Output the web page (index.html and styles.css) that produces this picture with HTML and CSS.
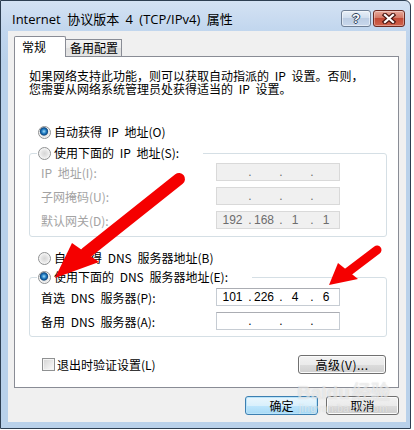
FILE: index.html
```html
<!DOCTYPE html>
<html lang="zh-CN">
<head>
    <meta charset="UTF-8">
    <meta name="viewport" content="width=device-width, initial-scale=1.0">
    <title>Internet 协议版本 4 (TCP/IPv4) 属性</title>
    <link rel="stylesheet" href="styles.css">
</head>
<body>
    <div class="screen">
        <div class="window">
            <div class="titlebar">
                <span class="title">Internet 协议版本 4 (TCP/IPv4) 属性</span>
                <div class="caption-buttons">
                    <div class="caption help"><span>?</span></div>
                    <div class="caption close">
                        <svg width="16" height="11" viewBox="0 0 16 11">
                            <path d="M4 2 L12 9 M12 2 L4 9" stroke="#4a1712" stroke-width="4.5" stroke-linecap="square"/>
                            <path d="M4 2 L12 9 M12 2 L4 9" stroke="#fff" stroke-width="2.2" stroke-linecap="square"/>
                        </svg>
                    </div>
                </div>
            </div>

            <div class="client">
                <div class="tabs">
                    <div class="tab active">常规</div>
                    <div class="tab">备用配置</div>
                </div>

                <div class="panel">
                    <p class="intro">如果网络支持此功能，则可以获取自动指派的 IP 设置。否则，<br>您需要从网络系统管理员处获得适当的 IP 设置。</p>

                    <div class="option ip-auto"><span class="radio checked"></span>自动获得 IP 地址(O)</div>

                    <fieldset class="group ip-group disabled">
                        <legend><span class="option"><span class="radio"></span>使用下面的 IP 地址(S):</span></legend>
                        <div class="row">
                            <span class="label">IP 地址(I):</span>
                            <span class="ip"><span></span><i>.</i><span></span><i>.</i><span></span><i>.</i><span></span></span>
                        </div>
                        <div class="row">
                            <span class="label">子网掩码(U):</span>
                            <span class="ip"><span></span><i>.</i><span></span><i>.</i><span></span><i>.</i><span></span></span>
                        </div>
                        <div class="row">
                            <span class="label">默认网关(D):</span>
                            <span class="ip"><span>192</span><i>.</i><span>168</span><i>.</i><span>1</span><i>.</i><span>1</span></span>
                        </div>
                    </fieldset>

                    <div class="option dns-auto"><span class="radio"></span>自动获得 DNS 服务器地址(B)</div>

                    <fieldset class="group dns-group">
                        <legend><span class="option"><span class="radio checked"></span>使用下面的 DNS 服务器地址(E):</span></legend>
                        <div class="row">
                            <span class="label">首选 DNS 服务器(P):</span>
                            <span class="ip"><span>101</span><i>.</i><span>226</span><i>.</i><span>4</span><i>.</i><span>6</span></span>
                        </div>
                        <div class="row">
                            <span class="label">备用 DNS 服务器(A):</span>
                            <span class="ip"><span></span><i>.</i><span></span><i>.</i><span></span><i>.</i><span></span></span>
                        </div>
                    </fieldset>

                    <div class="panel-footer">
                        <span class="check-label"><span class="checkbox"></span>退出时验证设置(L)</span>
                        <button class="btn advanced">高级(V)...</button>
                    </div>
                </div>

                <div class="actions">
                    <button class="btn default">确定</button>
                    <button class="btn">取消</button>
                </div>
            </div>
        </div>

        <!-- red marker arrows drawn over the dialog -->
        <svg class="arrows" width="414" height="430" viewBox="0 0 414 430">
            <line x1="179" y1="179" x2="86" y2="253" stroke="#f50000" stroke-width="12" stroke-linecap="round"/>
            <polygon points="72,243 99,262 55,278" fill="#f50000"/>
            <line x1="377" y1="250" x2="348" y2="272" stroke="#f50000" stroke-width="9" stroke-linecap="round"/>
            <polygon points="338,263 358,279 329,285" fill="#f50000"/>
        </svg>

        <div class="watermark">
            <span class="wm-logo">Bai<b>du</b>经验</span>
            <span class="wm-url">jingyan.baidu.com</span>
        </div>
    </div>
</body>
</html>
```

FILE: styles.css
```css
html, body {
    margin: 0;
    background: #fff;
}

body {
    font-family: "Noto Sans CJK SC", sans-serif;
    font-size: 12px;
    color: #000;
}

.screen {
    position: relative;
    width: 414px;
    height: 430px;
}

.window {
    display: flex;
    flex-direction: column;
    width: 411px;
    height: 429px;
    box-sizing: border-box;
    padding-bottom: 6px;
    border: 1px solid #2e3f52;
    border-radius: 0 6px 0 0;
    background: linear-gradient(to bottom, #d4e2f3, #c1d6ee 30px, #b9d1ea 60px, #b9d1ea);
}

.titlebar {
    display: flex;
    align-items: flex-start;
    height: 30px;
    padding-left: 11px;
}

.title {
    margin-top: 11px;
    font-family: "Open Sans", "Noto Sans CJK SC", sans-serif;
    font-size: 13px;
    line-height: 15px;
    word-spacing: 3px;
    white-space: nowrap;
}

.caption-buttons {
    display: flex;
    gap: 2px;
    margin: 9px 5px 0 auto;
}

.caption {
    display: flex;
    justify-content: center;
    align-items: center;
    height: 17px;
    box-sizing: border-box;
    border-radius: 3px;
}

.caption.help {
    width: 30px;
    border: 1px solid #6f7f95;
    background: linear-gradient(to bottom, #e9f0f8, #d1deee 45%, #bccde3 50%, #c9d8ec);
    box-shadow: inset 0 0 0 1px rgba(255, 255, 255, 0.5);
}

.caption.help span {
    font-family: "Liberation Sans", sans-serif;
    font-weight: bold;
    font-size: 13px;
    line-height: 13px;
    color: #fff;
    text-shadow: 1px 0 0 #2f425c, -1px 0 0 #2f425c, 0 1px 0 #2f425c, 0 -1px 0 #2f425c;
}

.caption.close {
    width: 32px;
    border: 1px solid #6b2a22;
    background: linear-gradient(to bottom, #e8aa9c, #d47967 45%, #c24a36 50%, #d0634d);
    box-shadow: inset 0 0 0 1px rgba(255, 255, 255, 0.35);
}

.client {
    flex: 1;
    margin: 0 4px 0 7px;
    background: #f0f0f0;
}

/* tabs */

.tabs {
    position: relative;
    z-index: 1;
    display: flex;
    align-items: flex-end;
    margin: 5px 0 -1px 6px;
}

.tab {
    box-sizing: border-box;
    border: 1px solid #898c95;
    border-bottom: none;
    line-height: 14px;
}

.tab.active {
    width: 52px;
    height: 21px;
    padding: 3px 0 0 7px;
    background: #fff;
    border-radius: 2px 2px 0 0;
}

.tab:not(.active) {
    width: 57px;
    height: 17px;
    margin: 0 0 1px -1px;
    padding: 1px 0 0 4px;
    background: linear-gradient(to bottom, #f3f3f3, #ebebeb 50%, #dedede 50%, #e5e5e5);
}

.panel {
    width: 385px;
    height: 332px;
    margin-left: 6px;
    box-sizing: border-box;
    padding: 12px 11px 0 14px;
    border: 1px solid #898c95;
    background: #fff;
    word-spacing: 3px;
}

.intro {
    margin: 0;
    line-height: 13px;
    white-space: nowrap;
}

/* radios, checkboxes */

.option {
    display: flex;
    align-items: center;
    gap: 3px;
    height: 14px;
    line-height: 14px;
    white-space: nowrap;
}

.ip-auto {
    margin-top: 30px;
    padding-left: 9px;
}

.dns-auto {
    margin-top: 14px;
    padding-left: 9px;
}

.radio {
    flex-shrink: 0;
    width: 13px;
    height: 13px;
    box-sizing: border-box;
    border: 1px solid #8f9192;
    border-radius: 50%;
    background: radial-gradient(circle, #d6d6d6 0, #e4e4e4 3px, #fbfbfb 6px);
}

.radio.checked {
    background:
        radial-gradient(circle at 45% 40%, #a9e0fb 0, #2b86c9 2px, #0b4f90 3.5px, #4a6f93 4px, transparent 4.6px),
        radial-gradient(circle, #d6d6d6 0, #e8e8e8 4px, #fbfbfb 6px);
}

.checkbox {
    flex-shrink: 0;
    width: 13px;
    height: 13px;
    box-sizing: border-box;
    border: 1px solid #8f9192;
    background: linear-gradient(135deg, #d3d3d3, #f0f0f0 70%, #fcfcfc);
    box-shadow: inset 0 0 0 1px #f4f4f4;
}

/* group boxes */

.group {
    min-width: 0;
    margin: 7px 0 0;
    padding: 0 0 4px;
    border: 1px solid #d5dfe5;
    border-radius: 3px;
}

.dns-group {
    margin-top: 5px;
    padding: 1px 0 3px;
}

.group legend {
    margin-left: 7px;
    padding: 0 24px 0 1px;
    height: 14px;
}

.row {
    display: flex;
    align-items: center;
    height: 24px;
    padding-left: 11px;
}

.label {
    width: 175px;
    white-space: nowrap;
}

.disabled .label {
    color: #a3a3a3;
}

.ip {
    display: grid;
    grid-template-columns: 30px 6px 25px 6px 25px 6px 25px;
    align-items: center;
    width: 124px;
    height: 18px;
    box-sizing: border-box;
    border: 1px solid #c6ccd3;
    border-top-color: #abadb3;
    background: #fff;
    font-family: "Liberation Sans", sans-serif;
    font-size: 12px;
    line-height: 16px;
    color: #000;
    text-align: center;
    word-spacing: 0;
}

.ip span {
    padding-right: 3px;
}

.ip span:first-child {
    padding: 0 0 0 1px;
}

.ip i {
    font-style: normal;
}

.disabled .ip {
    border-color: #d9d9d9;
    background: #f0f0f0;
    color: #6d6d6d;
}

/* footer rows and buttons */

.panel-footer {
    display: flex;
    align-items: center;
    height: 19px;
    margin-top: 18px;
    padding-left: 13px;
}

.check-label {
    display: flex;
    align-items: center;
    gap: 2px;
    line-height: 14px;
}

.btn {
    height: 19px;
    box-sizing: border-box;
    padding: 0;
    border: 1px solid #707070;
    border-radius: 3px;
    background: linear-gradient(to bottom, #f2f2f2, #ebebeb 50%, #dddddd 50%, #cfcfcf);
    box-shadow: inset 0 0 0 1px #fbfbfb;
    font-family: "Noto Sans CJK SC", sans-serif;
    font-size: 12px;
    line-height: 15px;
    color: #000;
}

.btn.advanced {
    width: 88px;
    margin: 0 1px 0 auto;
    letter-spacing: 0.5px;
}

.actions {
    display: flex;
    justify-content: flex-end;
    gap: 8px;
    margin-top: 8px;
    padding-right: 7px;
}

.actions .btn {
    width: 73px;
}

.btn.default {
    border-color: #3c7fb1;
    background: linear-gradient(to bottom, #eaf6fd, #d9f0fc 50%, #bee6fd 50%, #a7d9f5);
    box-shadow: inset 0 0 0 1px #b9e3f9;
}

/* overlays */

.arrows {
    position: absolute;
    top: 0;
    left: 0;
    pointer-events: none;
}

.watermark {
    position: absolute;
    left: 297px;
    top: 383px;
    display: flex;
    flex-direction: column;
    align-items: center;
    pointer-events: none;
    color: rgba(255, 255, 255, 0.55);
    text-shadow: 0 0 1px rgba(120, 120, 120, 0.3);
}

.wm-logo {
    font-family: "Liberation Sans", sans-serif;
    font-weight: bold;
    font-size: 19px;
    line-height: 20px;
}

.wm-logo b {
    margin-right: 2px;
}

.wm-url {
    font-family: "Liberation Sans", sans-serif;
    font-size: 10px;
    line-height: 12px;
    letter-spacing: 0.5px;
}
```
